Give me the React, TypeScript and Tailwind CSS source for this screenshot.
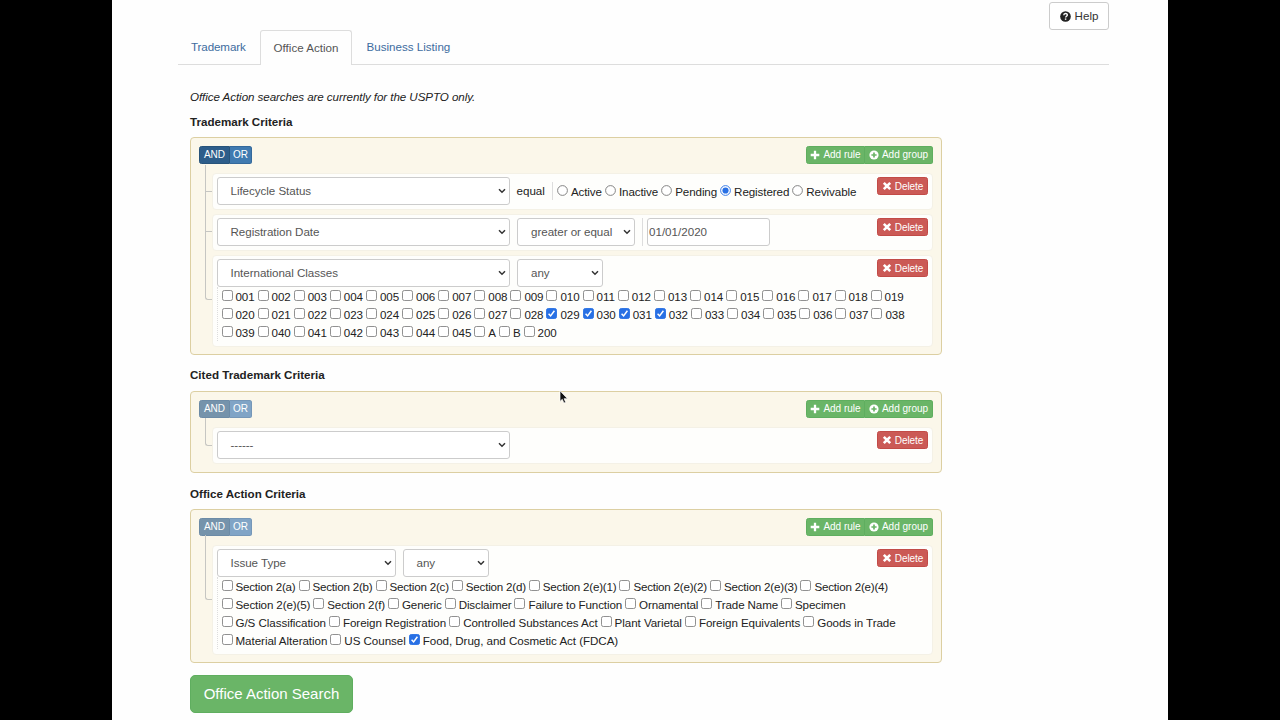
import type { ReactNode } from 'react';

type Row = { tracking: string; items: string[] };

const classRows: Row[] = [
  { tracking: 'tracking-[-0.08px]', items: ['001', '002', '003', '004', '005', '006', '007', '008', '009', '010', '011', '012', '013', '014', '015', '016', '017', '018', '019'] },
  { tracking: 'tracking-[-0.08px]', items: ['020', '021', '022', '023', '024', '025', '026', '027', '028', '029', '030', '031', '032', '033', '034', '035', '036', '037', '038'] },
  { tracking: 'tracking-[-0.08px]', items: ['039', '040', '041', '042', '043', '044', '045', 'A', 'B', '200'] },
];

const issueRows: Row[] = [
  { tracking: 'tracking-[-0.21px]', items: ['Section 2(a)', 'Section 2(b)', 'Section 2(c)', 'Section 2(d)', 'Section 2(e)(1)', 'Section 2(e)(2)', 'Section 2(e)(3)', 'Section 2(e)(4)'] },
  { tracking: 'tracking-[-0.13px]', items: ['Section 2(e)(5)', 'Section 2(f)', 'Generic', 'Disclaimer', 'Failure to Function', 'Ornamental', 'Trade Name', 'Specimen'] },
  { tracking: 'tracking-[-0.06px]', items: ['G/S Classification', 'Foreign Registration', 'Controlled Substances Act', 'Plant Varietal', 'Foreign Equivalents', 'Goods in Trade'] },
  { tracking: 'tracking-[-0.05px]', items: ['Material Alteration', 'US Counsel', 'Food, Drug, and Cosmetic Act (FDCA)'] },
];

const statuses = ['Active', 'Inactive', 'Pending', 'Registered', 'Revivable'];

function Checkbox({ checked }: { checked: boolean }) {
  return (
    <svg viewBox="0 0 11 11" className="h-[11px] w-[11px] shrink-0">
      <rect x="0.5" y="0.5" width="10" height="10" rx="1.8" fill={checked ? '#2870e4' : '#fff'} stroke={checked ? '#2870e4' : '#858585'} strokeWidth="0.9" />
      {checked && <path d="M2.6 5.8 4.6 7.9 8.4 2.8" fill="none" stroke="#fff" strokeWidth="1.5" />}
    </svg>
  );
}

function CheckRows({ rows, checked }: { rows: Row[]; checked: string[] }) {
  return (
    <div className="border-l border-dotted border-[#ddd] pl-1">
      {rows.map((row) => (
        <div key={row.items[0]} className={`flex h-[18px] gap-[3px] ${row.tracking}`}>
          {row.items.map((label) => (
            <label key={label} className="flex gap-[3px] whitespace-nowrap leading-[19px] text-[#222]">
              <span className="pt-[3px]">
                <Checkbox checked={checked.includes(label)} />
              </span>
              {label}
            </label>
          ))}
        </div>
      ))}
    </div>
  );
}

function Select({ className, children }: { className: string; children: ReactNode }) {
  return (
    <div className={`flex h-7 items-center justify-between rounded-[3px] border border-[#ccc] bg-white pl-[13px] pr-[3px] tracking-[-0.04px] text-[#555] ${className}`}>
      <span>{children}</span>
      <svg viewBox="0 0 8 6" className="h-[6px] w-2">
        <path d="M1 1.2 4 4.2 7 1.2" fill="none" stroke="#333" strokeWidth="1.5" />
      </svg>
    </div>
  );
}

function Delete() {
  return (
    <button className="ml-auto flex h-[18px] w-[51px] items-center justify-center gap-[3px] rounded-[2.5px] border border-[#c24b47] bg-[#cb5a56] text-[10px] tracking-[-0.1px] text-white">
      <svg viewBox="0 0 10 10" className="h-[10px] w-[10px]">
        <path d="M1.8 1.8 8.2 8.2M8.2 1.8 1.8 8.2" stroke="#fff" strokeWidth="2.6" />
      </svg>
      Delete
    </button>
  );
}

function Rule({ className, tick, children, below }: { className: string; tick: string; children: ReactNode; below?: ReactNode }) {
  return (
    <div className={`relative rounded-[4px] border border-[#f4f1e6] bg-[#fefefc] pl-[3.5px] pr-1 pt-[3px] ${className}`}>
      <span className={`absolute -left-2 w-[7px] border-[#c6c6c2] ${tick}`} />
      <div className="flex items-start">
        {children}
        <Delete />
      </div>
      {below}
    </div>
  );
}

function Group({ className, disabled, children }: { className: string; disabled?: boolean; children: ReactNode }) {
  return (
    <section className={`w-[752px] rounded-[4px] border border-[#dccfa2] bg-[#fbf7ea] px-2 pt-2 ${className}`}>
      <div className="flex h-[18px] justify-between text-[10px] leading-4 text-white">
        <div className="flex">
          <span className={`w-[31px] rounded-l-[2.5px] border text-center ${disabled ? 'border-[#6c8ba6] bg-[#7593ab]' : 'border-[#27537a] bg-[#2d5d8a]'}`}>AND</span>
          <span className={`w-[22px] rounded-r-[2.5px] border border-l-0 text-center ${disabled ? 'border-[#7597b8] bg-[#80a4c6]' : 'border-[#34699b] bg-[#407ab0]'}`}>OR</span>
        </div>
        <div className="flex">
          <span className="flex w-[59px] items-center justify-center gap-[3px] whitespace-nowrap rounded-l-[2.5px] border border-[#5fae5f] bg-[#6ab567]">
            <svg viewBox="0 0 10 10" className="h-[10px] w-[10px]">
              <path d="M5 .7v8.6M.7 5h8.6" stroke="#fff" strokeWidth="2.3" />
            </svg>
            Add rule
          </span>
          <span className="flex w-[68px] items-center justify-center gap-[3px] whitespace-nowrap rounded-r-[2.5px] border border-l-0 border-[#5fae5f] bg-[#6ab567]">
            <svg viewBox="0 0 10 10" className="h-[10px] w-[10px]">
              <circle cx="5" cy="5" r="4.6" fill="#fff" />
              <path d="M5 2.4v5.2M2.4 5h5.2" stroke="#6ab567" strokeWidth="1.7" />
            </svg>
            Add group
          </span>
        </div>
      </div>
      <div className="ml-[13px] flex flex-col gap-1 pt-[9px]">{children}</div>
    </section>
  );
}

export default function App() {
  return (
    <div className="flex h-[720px] w-[1280px] justify-center overflow-hidden bg-black font-['Liberation_Sans',Arial,sans-serif] text-[11.6px]">
      <div className="relative w-[1056px] bg-[#fefefe] pl-[66px] pr-[59px] pt-[2px] text-[#222]">
        <button className="ml-auto flex h-7 w-[60px] items-center justify-center gap-1 rounded-[3px] border border-[#ccc] bg-white text-[#333]">
          <svg viewBox="0 0 12 12" className="h-[11px] w-[11px]">
            <circle cx="6" cy="6" r="5.8" fill="#222" />
            <path d="M4.1 4.7C4.1 2.1 8 2.2 8 4.4 8 5.8 6.1 5.7 6.1 7.2" fill="none" stroke="#fff" strokeWidth="1.5" />
            <path d="M5.3 8.1h1.6v1.5H5.3z" fill="#fff" />
          </svg>
          Help
        </button>
        <nav className="flex h-[35px] border-b border-[#ddd] leading-[34px] text-[#3d6c9e]">
          <a className="w-[82px] pl-[13px] tracking-[-0.1px]">Trademark</a>
          <a className="h-[35px] w-[92px] rounded-t-[3px] border border-b-0 border-[#ddd] bg-[#fefefe] text-center leading-[33px] text-[#555]">Office Action</a>
          <a className="pl-[14.5px]">Business Listing</a>
        </nav>
        <main className="pl-3">
          <p className="mt-[23px] leading-[17px] tracking-[-0.07px] italic">Office Action searches are currently for the USPTO only.</p>
          <h2 className="mt-2 font-bold leading-[17px]">Trademark Criteria</h2>
          <Group className="mt-[7px] h-[218px]">
            <Rule className="h-[37px]" tick="top-[17px] border-t">
              <Select className="w-[293px]">Lifecycle Status</Select>
              <span className="ml-[7px] leading-7">equal</span>
              <div className="ml-[7px] mt-[5px] flex h-[18px] gap-[3px] border-l border-[#ddd] pl-1 leading-[20px] tracking-[-0.09px]">
                {statuses.map((status) => (
                  <label key={status} className="flex gap-[3px]">
                    <svg viewBox="0 0 11 11" className="mt-[3px] h-[11px] w-[11px]">
                      <circle cx="5.5" cy="5.5" r="4.9" fill="#fff" stroke={status === 'Registered' ? '#2870e4' : '#777'} strokeWidth="0.9" />
                      {status === 'Registered' && <circle cx="5.5" cy="5.5" r="3.1" fill="#2870e4" />}
                    </svg>
                    {status}
                  </label>
                ))}
              </div>
            </Rule>
            <Rule className="h-[37px]" tick="top-[16px] border-t">
              <Select className="w-[293px]">Registration Date</Select>
              <Select className="ml-[7.5px] w-[118px]">greater or equal</Select>
              <div className="ml-[7px] border-l border-[#ddd] pl-1">
                <div className="h-7 w-[123px] rounded-[3px] border border-[#ccc] bg-white pl-[1px] leading-[26px] text-[#555]">01/01/2020</div>
              </div>
            </Rule>
            <Rule
              className="h-[92px]"
              tick="bottom-[46px] h-[135px] rounded-bl-[3px] border-b border-l"
              below={<CheckRows rows={classRows} checked={['029', '030', '031', '032']} />}
            >
              <Select className="w-[293px]">International Classes</Select>
              <Select className="ml-[7.5px] w-[86px]">any</Select>
            </Rule>
          </Group>
          <h2 className="mt-[11px] font-bold leading-[17px]">Cited Trademark Criteria</h2>
          <Group className="mt-2 h-[82px]" disabled>
            <Rule className="h-[37px]" tick="bottom-[17px] h-[28px] rounded-bl-[3px] border-b border-l">
              <Select className="w-[293px]">------</Select>
            </Rule>
          </Group>
          <h2 className="mt-3 font-bold leading-[17px]">Office Action Criteria</h2>
          <Group className="mt-[7px] h-[154px]" disabled>
            <Rule
              className="h-[110px]"
              tick="bottom-[54px] h-[65px] rounded-bl-[3px] border-b border-l"
              below={<CheckRows rows={issueRows} checked={['Food, Drug, and Cosmetic Act (FDCA)']} />}
            >
              <Select className="w-[179px]">Issue Type</Select>
              <Select className="ml-[7px] w-[86px]">any</Select>
            </Rule>
          </Group>
          <button className="mt-3 h-[38px] w-[163px] rounded-[5px] border border-[#5fae5f] bg-[#6ab567] text-[15px] text-white">Office Action Search</button>
        </main>
        <svg viewBox="0 0 10 14" className="absolute left-[447px] top-[390px] h-[14px] w-[10px]">
          <path d="M1 .8v10.6l2.3-2.1 1.6 3.8 1.8-.8-1.6-3.6h3.4z" fill="#111" stroke="#fff" strokeWidth="0.7" />
        </svg>
      </div>
    </div>
  );
}
